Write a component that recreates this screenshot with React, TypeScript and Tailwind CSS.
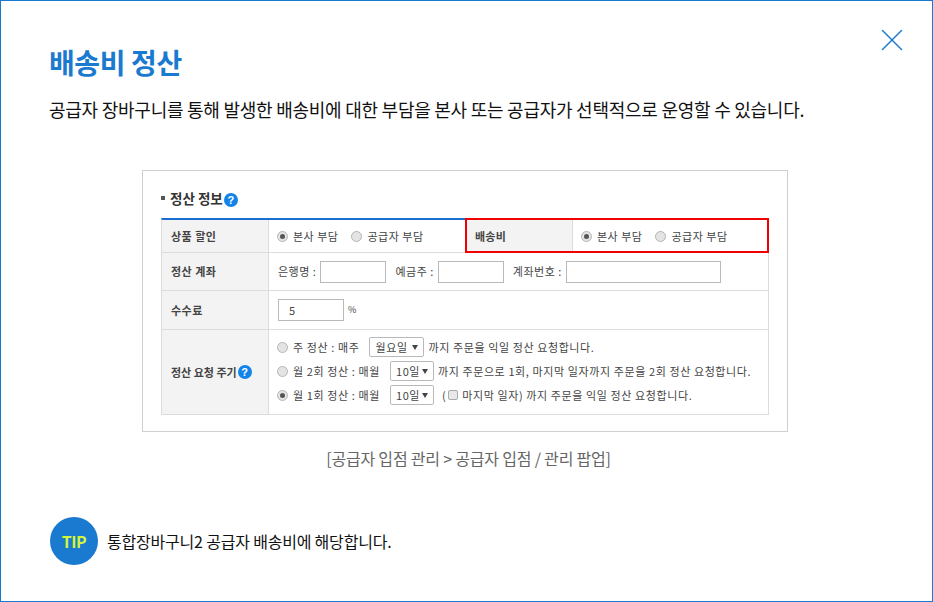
import React from 'react'
import { X } from 'lucide-react'

const kr = "font-['Noto_Sans_CJK_KR',sans-serif]"

function Help() {
    return (
        <span className="inline-flex w-[14px] h-[14px] rounded-full bg-[#1283e8] text-white text-[11px] font-bold items-center justify-center font-['Liberation_Sans',sans-serif] shrink-0 tracking-normal">
            ?
        </span>
    )
}

function Radio({ checked }: { checked?: boolean }) {
    return (
        <span className="inline-flex w-[11px] h-[11px] rounded-full border border-[#b5b5b5] bg-[#e4e4e4] items-center justify-center shrink-0">
            {checked && <span className="w-[5px] h-[5px] rounded-full bg-[#555]" />}
        </span>
    )
}

function Field({ className }: { className: string }) {
    return <span className={`inline-block h-[22px] border border-[#b9b9b9] bg-white ${className}`} />
}

function Select({ label, className }: { label: string; className: string }) {
    return (
        <span className={`inline-flex items-center justify-between h-[20px] px-[5px] border border-[#b9b9b9] rounded-[2px] bg-white text-[#444] ${className}`}>
            {label}
            <span className="w-0 h-0 border-x-[3px] border-x-transparent border-t-[5px] border-t-[#444]" />
        </span>
    )
}

function Shipping() {
    return (
        <>
            <span className="flex items-center gap-[5px]"><Radio checked />본사 부담</span>
            <span className="flex items-center gap-[5px] ml-[13px]"><Radio />공급자 부담</span>
        </>
    )
}

export default function App() {
    return (
        <div className={`w-[933px] h-[602px] border border-[#1a7ad0] bg-white relative overflow-hidden ${kr}`}>
            <X className="absolute top-[20px] right-[21px] w-[38px] h-[38px] text-[#1a7ad0]" strokeWidth={0.9} />

            <div className="pl-[48px] pt-[41px]">
                <h1 className="text-[28px] leading-[40px] font-bold text-[#1a7ad0] tracking-[-0.4px]">배송비 정산</h1>
                <p className="mt-[14px] text-[18px] leading-[26px] text-[#111] tracking-[-0.25px]">
                    공급자 장바구니를 통해 발생한 배송비에 대한 부담을 본사 또는 공급자가 선택적으로 운영할 수 있습니다.
                </p>
            </div>

            <div className="ml-[141px] mt-[48px] w-[646px] h-[262px] border border-[#cfcfcf] px-[18px] pt-[17px] text-[11px] tracking-[0.5px] text-[#444]">
                <div className="flex items-center h-[20px] text-[13.5px] font-bold text-[#333] tracking-[0px]">
                    <span className="w-[4px] h-[4px] bg-[#555] mr-[5px]" />
                    정산 정보
                    <span className="ml-[1px]"><Help /></span>
                </div>

                <div className="mt-[10px] w-[608px] border-t-2 border-t-[#1a6fd0] border-x border-b border-[#dcdcdc] grid grid-cols-[107px_1fr] relative">
                    <div className="h-[33px] bg-[#f3f3f3] border-r border-b border-[#dcdcdc] flex items-center pl-[9px] font-bold">상품 할인</div>
                    <div className="h-[33px] border-b border-[#dcdcdc] flex items-center pl-[8px]">
                        <div className="flex items-center w-[190px]"><Shipping /></div>
                        <div className="flex items-center self-stretch w-[106px] bg-[#f3f3f3] border-r border-[#dcdcdc] pl-[8px] font-bold tracking-[0.2px]">배송비</div>
                        <div className="flex items-center pl-[8px]"><Shipping /></div>
                    </div>

                    <div className="h-[38px] bg-[#f3f3f3] border-r border-b border-[#dcdcdc] flex items-center pl-[9px] font-bold">정산 계좌</div>
                    <div className="h-[38px] border-b border-[#dcdcdc] flex items-center pl-[9px]">
                        은행명 :<Field className="w-[66px] ml-[4px]" />
                        <span className="ml-[9px]">예금주 :</span><Field className="w-[66px] ml-[4px]" />
                        <span className="ml-[9px]">계좌번호 :</span><Field className="w-[155px] ml-[4px]" />
                    </div>

                    <div className="h-[39px] bg-[#f3f3f3] border-r border-b border-[#dcdcdc] flex items-center pl-[9px] font-bold">수수료</div>
                    <div className="h-[39px] border-b border-[#dcdcdc] flex items-center pl-[9px]">
                        <span className="inline-flex items-center w-[66px] h-[22px] border border-[#b9b9b9] pl-[10px]">5</span>
                        <span className="ml-[4px] text-[9px]">%</span>
                    </div>

                    <div className="h-[84px] bg-[#f3f3f3] border-r border-[#dcdcdc] flex items-center pl-[9px] font-bold gap-[1px] tracking-[0px]">
                        정산 요청 주기<Help />
                    </div>
                    <div className="h-[84px] flex flex-col justify-center gap-[4px] pl-[8px] -translate-y-[1px] tracking-[0.6px]">
                        <div className="flex items-center h-[20px]">
                            <Radio /><span className="ml-[5px]">주 정산 : 매주</span>
                            <Select label="월요일" className="w-[55px] ml-[10px]" />
                            <span className="ml-[4px]">까지 주문을 익일 정산 요청합니다.</span>
                        </div>
                        <div className="flex items-center h-[20px]">
                            <Radio /><span className="ml-[5px]">월 2회 정산 : 매월</span>
                            <Select label="10일" className="w-[44px] ml-[10px]" />
                            <span className="ml-[4px]">까지 주문으로 1회, 마지막 일자까지 주문을 2회 정산 요청합니다.</span>
                        </div>
                        <div className="flex items-center h-[20px]">
                            <Radio checked /><span className="ml-[5px]">월 1회 정산 : 매월</span>
                            <Select label="10일" className="w-[44px] ml-[10px]" />
                            <span className="ml-[8px]">(</span>
                            <span className="w-[10px] h-[10px] border border-[#aaa] rounded-[2px] bg-[#e8e8e8] mx-[2px]" />
                            <span className="ml-[2px]">마지막 일자) 까지 주문을 익일 정산 요청합니다.</span>
                        </div>
                    </div>

                    <div className="absolute left-[303px] top-[-2px] w-[304px] h-[35px] border-2 border-[#f00000] pointer-events-none" />
                </div>
            </div>

            <p className="mt-[14px] w-[933px] pl-[2px] text-center text-[16px] leading-[24px] text-[#666] tracking-[-0.2px]">
                [공급자 입점 관리 &gt; 공급자 입점 / 관리 팝업]
            </p>

            <div className="ml-[49px] mt-[47px] flex items-center">
                <span className="w-[48px] h-[48px] rounded-full bg-[#1a7ad0] flex items-center justify-center text-[#d4f53c] text-[16px] font-bold tracking-[-0.5px]">TIP</span>
                <span className="ml-[9px] text-[16px] text-[#111] tracking-[-0.2px]">통합장바구니2 공급자 배송비에 해당합니다.</span>
            </div>
        </div>
    )
}
